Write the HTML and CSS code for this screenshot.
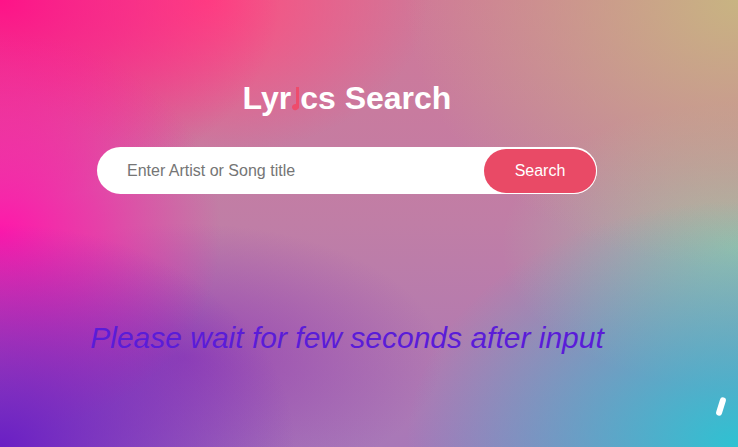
FILE: index.html
```html
<!DOCTYPE html>
<html lang="en">
<head>
<meta charset="utf-8">
<title>Lyrics Search</title>
<link rel="stylesheet" href="styles.css">
</head>
<body>
<main class="app">
  <h1 class="title">Lyr<span class="note" aria-hidden="true"><span class="note-stem"></span><span class="note-head"></span></span>cs Search</h1>
  <form class="search">
    <input class="search-input" type="text" placeholder="Enter Artist or Song title">
    <button class="search-btn" type="button">Search</button>
  </form>
  <p class="hint">Please wait for few seconds after input</p>
</main>
<div class="pill"></div>
</body>
</html>
```
FILE: styles.css
```css
html, body {
  margin: 0;
  height: 100%;
}
body {
  position: relative;
  overflow: hidden;
  font-family: "Liberation Sans", Arial, sans-serif;
  background:
    radial-gradient(ellipse 40% 50% at 0% 100%, #6a1ec4 0%, rgba(106,30,196,0.6) 40%, rgba(106,30,196,0) 100%),
    radial-gradient(ellipse 45% 55% at 100% 100%, #2ec2d2 0%, rgba(46,194,210,0.6) 40%, rgba(46,194,210,0) 100%),
    radial-gradient(ellipse 45% 60% at 100% 0%, #c8b482 0%, rgba(200,180,130,0.6) 40%, rgba(200,180,130,0) 100%),
    radial-gradient(ellipse 32% 32% at 100% 55%, rgba(160,196,168,0.9), rgba(160,196,168,0) 100%),
    radial-gradient(ellipse 30% 45% at 0% 52%, #ff18aa 0%, rgba(255,24,170,0.6) 45%, rgba(255,24,170,0) 100%),
    radial-gradient(ellipse 38% 45% at 0% 0%, #ff1288 0%, rgba(255,18,136,0.6) 45%, rgba(255,18,136,0) 100%),
    radial-gradient(ellipse 30% 35% at 28% 0%, #ff4a80 0%, rgba(255,74,128,0) 100%),
    radial-gradient(ellipse 35% 30% at 25% 80%, rgba(140,50,180,0.7), rgba(140,50,180,0) 100%),
    linear-gradient(to bottom, #d07898 0%, #c07ea6 50%, #a878b8 100%);
}
.app {
  width: 500px;
  margin-left: 97px;
  padding-top: 78px;
  display: flex;
  flex-direction: column;
  align-items: center;
}
.title {
  margin: 0;
  color: #fff;
  font-size: 32px;
  font-weight: 700;
  line-height: 40px;
}
.note {
  display: inline-block;
  position: relative;
  width: 9px;
  height: 24px;
  vertical-align: -1px;
}
.note-stem {
  position: absolute;
  left: 5px;
  top: 1px;
  width: 2.5px;
  height: 21px;
  background: #ee4c6c;
}
.note-head {
  position: absolute;
  left: 0.5px;
  top: 17.5px;
  width: 7px;
  height: 6px;
  border-radius: 50%;
  background: #ee4c6c;
  transform: rotate(-25deg);
}
.search {
  margin-top: 29px;
  width: 500px;
  height: 47px;
  box-sizing: border-box;
  background: #fff;
  border-radius: 24px;
  display: flex;
  align-items: center;
  padding: 2px 1px 2px 30px;
}
.search-input {
  flex: 1;
  border: none;
  outline: none;
  background: transparent;
  font-family: "Liberation Sans", Arial, sans-serif;
  font-size: 16px;
  color: #333;
  padding: 0;
}
.search-input::placeholder {
  color: #757575;
}
.search-btn {
  width: 112px;
  height: 44px;
  border: none;
  border-radius: 22px;
  background: #e94a66;
  color: #fff;
  font-family: "Liberation Sans", Arial, sans-serif;
  font-size: 16px;
  padding: 0;
  box-shadow: 0 0 0 1px rgba(255,255,255,0.8);
}
.hint {
  margin: 126px 0 0 0;
  color: #5a1cd8;
  font-size: 30px;
  font-style: italic;
  line-height: 36px;
  white-space: nowrap;
}
.pill {
  position: absolute;
  left: 718px;
  top: 397px;
  width: 6px;
  height: 19px;
  background: #fff;
  border-radius: 3px;
  transform: rotate(17deg);
}
```
